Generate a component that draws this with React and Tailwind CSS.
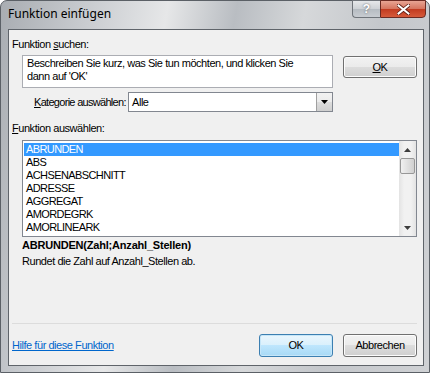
import React from "react";

const items = [
  "ABRUNDEN",
  "ABS",
  "ACHSENABSCHNITT",
  "ADRESSE",
  "AGGREGAT",
  "AMORDEGRK",
  "AMORLINEARK",
];

const Win7Button = ({ children, focused, className = "" }) => (
  <div
    className={
      "flex items-center justify-center rounded-[3px] border text-[11px] text-black " +
      (focused
        ? "border-[#3c7fb1] bg-[linear-gradient(180deg,#eaf6fd_0%,#d9f0fc_50%,#bee6fd_50%,#a7d9f5_100%)] shadow-[inset_0_0_0_1px_#c6e6f8] "
        : "border-[#707070] bg-[linear-gradient(180deg,#f2f2f2_0%,#ebebeb_50%,#dddddd_50%,#cfcfcf_100%)] shadow-[inset_0_0_0_1px_#fcfcfc] ") +
      className
    }
  >
    {children}
  </div>
);

const ScrollArrow = ({ down }) => (
  <svg width="7" height="4" viewBox="0 0 7 4">
    {down ? <path d="M0 0h7L3.5 4z" fill="#3d3d3d" /> : <path d="M0 4h7L3.5 0z" fill="#3d3d3d" />}
  </svg>
);

export default function App() {
  return (
    <div
      className="w-[430px] h-[373px] flex flex-col pl-[7px] pr-[5px] pb-[6px] rounded-t-[7px] border border-[#5b6066] bg-[linear-gradient(100deg,#a9adb2_0%,#c9ccd0_18%,#e6e7e8_34%,#b9bdc2_48%,#d6d8da_62%,#c4c7cb_78%,#cfd1d4_100%)]"
      style={{ fontFamily: '"Liberation Sans", Arial, sans-serif' }}
    >
      {/* title bar */}
      <div className="h-[28px] flex items-start justify-between">
        <span
          className="mt-[4px] text-[12px] text-black"
          style={{ fontFamily: '"Noto Sans", "Open Sans", sans-serif' }}
        >
          Funktion einfügen
        </span>
        <div className="flex -mt-px -mr-[2px]">
          <div className="w-[28px] h-[18px] flex items-center justify-center rounded-bl-[4px] border border-[#6f747a] border-r-0 bg-[linear-gradient(180deg,#e6e8ea_0%,#cdd1d5_50%,#b5bbc1_50%,#c8ccd1_100%)] text-[12px] font-bold text-white [text-shadow:0_0_2px_#555]">
            ?
          </div>
          <div className="w-[46px] h-[18px] flex items-center justify-center rounded-br-[4px] border border-[#6b2a22] bg-[linear-gradient(180deg,#e8a493_0%,#d5735d_50%,#c13a1f_50%,#d65a3a_100%)]">
            <svg width="13" height="11" viewBox="0 0 13 11">
              <path d="M1.5 1.5l10 8M11.5 1.5l-10 8" stroke="#5a1a10" strokeWidth="3.6" strokeLinecap="square" />
              <path d="M1.5 1.5l10 8M11.5 1.5l-10 8" stroke="#ffffff" strokeWidth="2" strokeLinecap="square" />
            </svg>
          </div>
        </div>
      </div>

      {/* client area */}
      <div className="flex-1 flex flex-col border border-[#5f646a] bg-[#f0f0f0] pl-[3px] pr-[6px] pb-[8px] text-[11px] tracking-[-0.45px] text-black">
        <div className="mt-[8px] h-[13px] leading-[13px]">
          Funktion <span className="underline">s</span>uchen:
        </div>
        <div className="flex">
          <div className="mt-[4px] ml-[10px] w-[311px] h-[33px] border border-[#abadb3] bg-white px-[4px] pt-[1px] leading-[13px] whitespace-nowrap">
            Beschreiben Sie kurz, was Sie tun möchten, und klicken Sie
            <br />
            dann auf 'OK'
          </div>
          <Win7Button className="mt-[5px] ml-[10px] w-[74px] h-[22px]">
            <span>
              <span className="underline">O</span>K
            </span>
          </Win7Button>
        </div>
        <div className="mt-[4px] flex items-center">
          <div className="ml-[22px] w-[94px] shrink-0 whitespace-nowrap tracking-[-0.7px]">
            <span className="underline">K</span>ategorie auswählen:
          </div>
          <div className="w-[205px] h-[20px] shrink-0 flex items-center border border-[#828790] bg-white">
            <span className="flex-1 pl-[3px]">Alle</span>
            <div className="w-[16px] h-[18px] flex items-center justify-center border-l border-[#a0a0a0] bg-[linear-gradient(180deg,#f2f2f2_0%,#ebebeb_50%,#dddddd_50%,#cfcfcf_100%)]">
              <svg width="7" height="4" viewBox="0 0 7 4">
                <path d="M0 0h7L3.5 4z" fill="#000" />
              </svg>
            </div>
          </div>
        </div>
        <div className="mt-[10px] h-[13px] leading-[13px]">
          <span className="underline">F</span>unktion auswählen:
        </div>
        <div className="mt-[5px] ml-[10px] w-[395px] h-[97px] flex border border-[#828790] bg-white">
          <div className="flex-1 flex flex-col pt-[2px] pl-px">
            {items.map((it, i) => (
              <div
                key={it}
                className={
                  "h-[13px] leading-[13px] pl-[2px] tracking-[-0.6px] " +
                  (i === 0 ? "bg-[#3399ff] text-white" : "")
                }
              >
                {it}
              </div>
            ))}
          </div>
          <div className="w-[17px] flex flex-col items-center bg-[linear-gradient(90deg,#e3e3e3,#f1f1f1_30%,#f1f1f1_70%,#e3e3e3)]">
            <div className="h-[17px] flex items-center justify-center">
              <ScrollArrow />
            </div>
            <div className="w-[15px] h-[16px] rounded-[2px] border border-[#979797] bg-[linear-gradient(90deg,#f0f0f0,#e0e0e0_50%,#d0d0d0)]" />
            <div className="flex-1" />
            <div className="h-[17px] flex items-center justify-center">
              <ScrollArrow down />
            </div>
          </div>
        </div>
        <div className="mt-[2px] ml-[10px] h-[13px] leading-[13px] font-bold tracking-[-0.2px]">
          ABRUNDEN(Zahl;Anzahl_Stellen)
        </div>
        <div className="mt-[3px] ml-[10px] h-[13px] leading-[13px]">
          Rundet die Zahl auf Anzahl_Stellen ab.
        </div>
        <div className="flex-1" />
        <div className="border-t border-[#dcdcdc]" />
        <div className="mt-[10px] flex items-center">
          <span className="flex-1 text-[#0066cc] underline">Hilfe für diese Funktion</span>
          <Win7Button focused className="w-[74px] h-[23px]">
            OK
          </Win7Button>
          <Win7Button className="ml-[10px] w-[74px] h-[23px]">Abbrechen</Win7Button>
        </div>
      </div>
    </div>
  );
}
